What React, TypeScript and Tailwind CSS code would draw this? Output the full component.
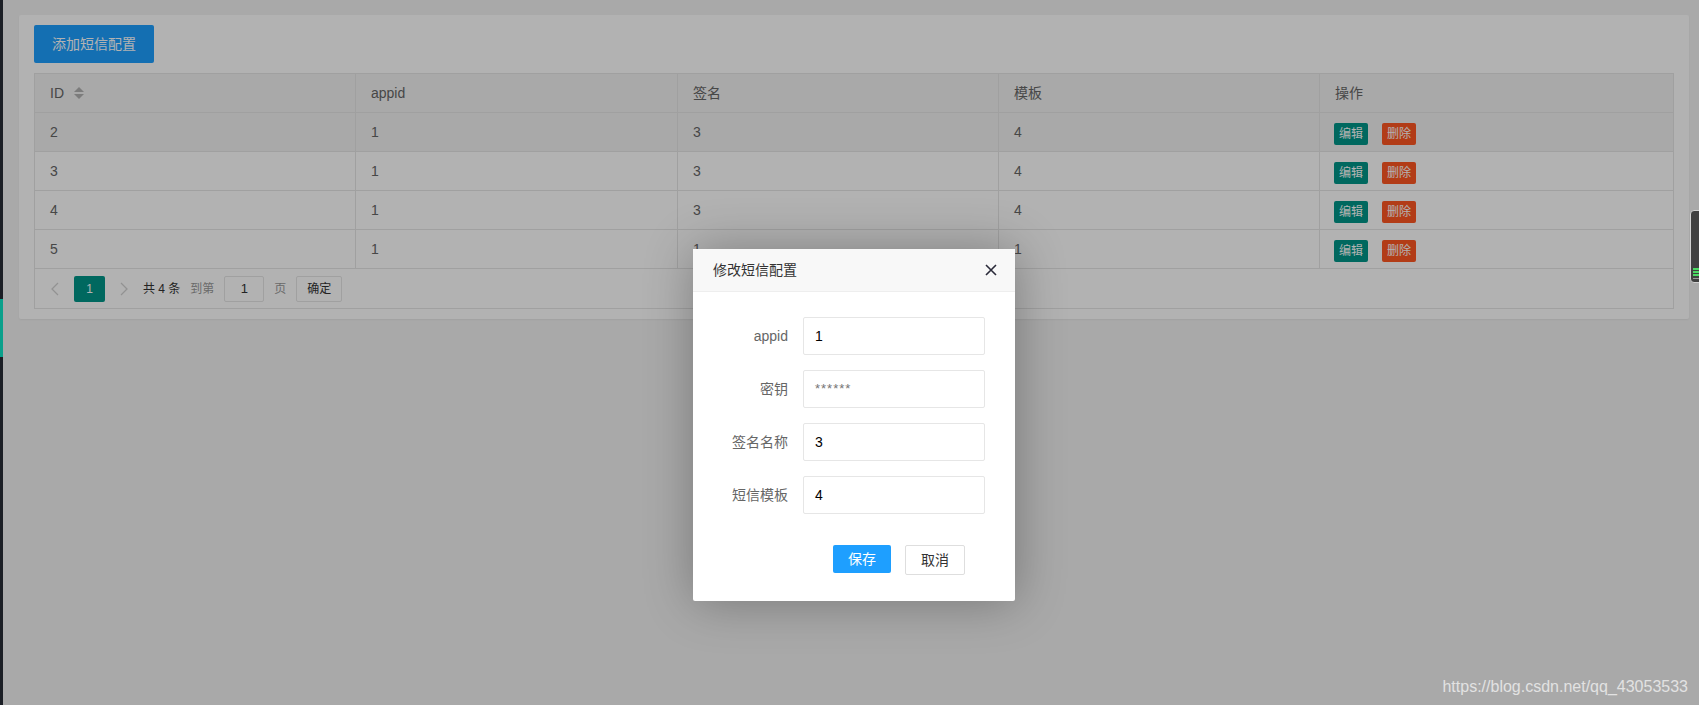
import React from 'react';

const font = { fontFamily: '"Liberation Sans", "Noto Sans CJK SC", sans-serif' };

const rows = [
  { id: 2, appid: 1, sign: 3, tpl: 4 },
  { id: 3, appid: 1, sign: 3, tpl: 4 },
  { id: 4, appid: 1, sign: 3, tpl: 4 },
  { id: 5, appid: 1, sign: 1, tpl: 1 },
];

const cols = 'grid grid-cols-[321px_322px_321px_321px_1fr]';

const SortIcon = () => (
  <svg width="10" height="12" viewBox="0 0 10 12" className="ml-[10px]">
    <polygon points="5,0 10,5 0,5" fill="#b2b2b2" />
    <polygon points="0,7 10,7 5,12" fill="#b2b2b2" />
  </svg>
);

const Chevron = ({ dir }: { dir: 'l' | 'r' }) => (
  <svg width="8" height="14" viewBox="0 0 8 14">
    <polyline
      points={dir === 'l' ? '7,1 1,7 7,13' : '1,1 7,7 1,13'}
      fill="none"
      stroke="#d2d2d2"
      strokeWidth="1.3"
    />
  </svg>
);

const FormRow = ({ label, value, muted }: { label: string; value: string; muted?: boolean }) => (
  <div className="flex items-center">
    <label className="w-[95px] text-right text-[14px] text-[#666]">{label}</label>
    <div className="ml-[15px] w-[182px] h-[38px] border border-[#e6e6e6] rounded-[2px] bg-white flex items-center pl-[11px]">
      <span className={muted ? 'text-[13px] text-[#757575] tracking-[1px]' : 'text-[14px] text-black'}>{value}</span>
    </div>
  </div>
);

export default function App() {
  return (
    <div className="relative flex w-full h-[705px] overflow-hidden bg-[#f2f2f2]" style={font}>
      {/* side strip of the parent frame */}
      <div className="w-[3px] shrink-0 bg-[#1b1e25] flex flex-col">
        <div className="h-[299px]" />
        <div className="h-[58px] bg-[#0aa08b]" />
      </div>

      <div className="relative flex-1">
        {/* Card */}
        <div className="mt-[15px] ml-[16px] mr-[10px] bg-white rounded-[2px] shadow-[0_1px_2px_0_rgba(0,0,0,0.05)] px-[15px] pt-[10px] pb-[10px]">
          <button className="h-[38px] w-[120px] rounded-[2px] bg-[#1E9FFF] text-white text-[14px]">添加短信配置</button>

          <div className="mt-[10px] border border-[#e6e6e6] text-[14px] text-[#666]">
            <div className={`${cols} bg-[#f2f2f2] border-b border-[#e6e6e6]`}>
              <div className="flex items-center px-[15px] h-[38px] border-r border-[#e6e6e6]">
                ID
                <SortIcon />
              </div>
              <div className="flex items-center px-[15px] h-[38px] border-r border-[#e6e6e6]">appid</div>
              <div className="flex items-center px-[15px] h-[38px] border-r border-[#e6e6e6]">签名</div>
              <div className="flex items-center px-[15px] h-[38px] border-r border-[#e6e6e6]">模板</div>
              <div className="flex items-center px-[15px] h-[38px]">操作</div>
            </div>
            {rows.map((r, i) => (
              <div key={r.id} className={`${cols} border-b border-[#e6e6e6] ${i === 0 ? 'bg-[#f2f2f2]' : 'bg-white'}`}>
                <div className="flex items-center px-[15px] h-[38px] border-r border-[#e6e6e6]">{r.id}</div>
                <div className="flex items-center px-[15px] h-[38px] border-r border-[#e6e6e6]">{r.appid}</div>
                <div className="flex items-center px-[15px] h-[38px] border-r border-[#e6e6e6]">{r.sign}</div>
                <div className="flex items-center px-[15px] h-[38px] border-r border-[#e6e6e6]">{r.tpl}</div>
                <div className="flex items-start px-[14px] pt-[10px] h-[38px]">
                  <span className="h-[22px] px-[5px] leading-[22px] rounded-[2px] bg-[#009688] text-white text-[12px]">编辑</span>
                  <span className="ml-[14px] h-[22px] px-[5px] leading-[22px] rounded-[2px] bg-[#FF5722] text-white text-[12px]">删除</span>
                </div>
              </div>
            ))}
            {/* pagination */}
            <div className="flex items-center h-[39px] pl-[1px] text-[12px]">
              <span className="w-[38px] h-[26px] flex items-center justify-center"><Chevron dir="l" /></span>
              <span className="w-[31px] h-[26px] flex items-center justify-center rounded-[2px] bg-[#009688] text-white">1</span>
              <span className="w-[38px] h-[26px] flex items-center justify-center"><Chevron dir="r" /></span>
              <div className="flex items-center gap-[10px]">
                <span className="text-[#333]">共 4 条</span>
                <span className="text-[#999]">到第</span>
                <span className="w-[40px] h-[26px] border border-[#e6e6e6] rounded-[2px] flex items-center justify-center text-[#333] text-[13px]">1</span>
                <span className="text-[#999]">页</span>
                <span className="w-[46px] h-[26px] border border-[#e6e6e6] rounded-[2px] bg-white flex items-center justify-center text-[#333]">确定</span>
              </div>
            </div>
          </div>
        </div>

        {/* shade */}
        <div className="absolute inset-0 bg-black/30" />

        {/* dialog */}
        <div className="absolute left-[690px] top-[249px] w-[322px] h-[352px] bg-white rounded-[2px] shadow-[1px_1px_50px_rgba(0,0,0,0.3)]">
          <div className="h-[43px] bg-[#f8f8f8] border-b border-[#eee] flex items-center justify-between pl-[20px] pr-[18px]">
            <span className="text-[14px] text-[#333]">修改短信配置</span>
            <svg width="12" height="12" viewBox="0 0 12 12">
              <path d="M1 1 L11 11 M11 1 L1 11" stroke="#2b2b3a" strokeWidth="1.6" />
            </svg>
          </div>
          <div className="pt-[25px] flex flex-col gap-[15px]">
            <FormRow label="appid" value="1" />
            <FormRow label="密钥" value="******" muted />
            <FormRow label="签名名称" value="3" />
            <FormRow label="短信模板" value="4" />
          </div>
          <div className="flex items-start pl-[140px] mt-[31px] gap-[14px]">
            <button className="w-[58px] h-[28px] rounded-[2px] bg-[#1E9FFF] text-white text-[14px]">保存</button>
            <button className="w-[60px] h-[30px] rounded-[2px] bg-white border border-[#dedede] text-[#333] text-[14px]">取消</button>
          </div>
        </div>
      </div>

      {/* floating widget at the right edge */}
      <div className="absolute right-[-4px] top-[210px] w-[13px] h-[73px] rounded-[4px] bg-[#404040] border border-[#d0d0d0] flex flex-col justify-end pl-[2px] pb-[3px] gap-[1px]">
        <div className="h-[2px] bg-[#4cd964]" />
        <div className="h-[2px] bg-[#4cd964]" />
        <div className="h-[2px] bg-[#4cd964]" />
        <div className="h-[1px] bg-[#999] mt-[1px]" />
      </div>

      {/* watermark */}
      <div className="absolute right-[11px] top-[675px] text-[16px] text-[#e2e2e2]">https://blog.csdn.net/qq_43053533</div>
    </div>
  );
}
